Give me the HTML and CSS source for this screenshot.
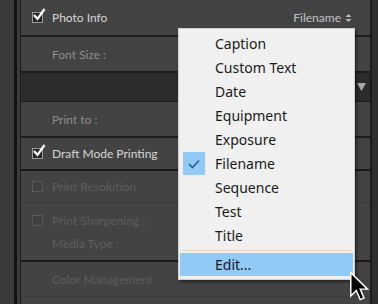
FILE: index.html
```html
<!DOCTYPE html>
<html lang="en">

<head>
  <meta charset="UTF-8">
  <title>Print Settings</title>
  <link rel="stylesheet" href="styles.css">
</head>

<body>
  <div class="frame">
    <div class="edge-strip"></div>
    <div class="edge-dark"></div>
    <div class="edge-gap"></div>

    <div class="panel">
      <div class="row row-first">
        <span class="checkbox checked">
          <svg viewBox="0 0 14 14" width="14" height="14"><path d="M2 7 L5.5 11 L12.5 1" fill="none" stroke="#fff" stroke-width="2.2"/></svg>
        </span>
        <span class="label">Photo Info</span>
        <span class="select">Filename
          <svg viewBox="0 0 7 10" width="7" height="10"><path d="M0.5 4 L3.5 1 L6.5 4 Z M0.5 6 L3.5 9 L6.5 6 Z" fill="#b8b8b8"/></svg>
        </span>
      </div>
      <div class="row row-plain">
        <span class="label dim">Font Size :</span>
      </div>

      <div class="header">
        <svg viewBox="0 0 9 8" width="9" height="8"><path d="M0 0 L9 0 L4.5 8 Z" fill="#a8a8a8"/></svg>
      </div>

      <div class="row row-plain">
        <span class="label dim">Print to :</span>
      </div>
      <div class="row row-check">
        <span class="checkbox checked">
          <svg viewBox="0 0 14 14" width="14" height="14"><path d="M2 7 L5.5 11 L12.5 1" fill="none" stroke="#fff" stroke-width="2.2"/></svg>
        </span>
        <span class="label">Draft Mode Printing</span>
      </div>
      <div class="row row-check faint-line">
        <span class="checkbox off"></span>
        <span class="label off">Print Resolution</span>
      </div>
      <div class="group">
        <div class="group-line">
          <span class="checkbox off"></span>
          <span class="label off">Print Sharpening :</span>
        </div>
        <div class="group-line sub">
          <span class="label off">Media Type :</span>
        </div>
      </div>
      <div class="row row-plain faint-line">
        <span class="label off">Color Management</span>
      </div>
    </div>

    <div class="edge-right"></div>
  </div>

  <div class="menu">
    <div class="menu-item">Caption</div>
    <div class="menu-item">Custom Text</div>
    <div class="menu-item">Date</div>
    <div class="menu-item">Equipment</div>
    <div class="menu-item">Exposure</div>
    <div class="menu-item">
      <span class="tick">
        <svg viewBox="0 0 12 10" width="12" height="10"><path d="M1 5 L4.5 8.5 L11 1.5" fill="none" stroke="#2f5f8f" stroke-width="1.6"/></svg>
      </span>
      Filename
    </div>
    <div class="menu-item">Sequence</div>
    <div class="menu-item">Test</div>
    <div class="menu-item">Title</div>
    <div class="menu-sep"></div>
    <div class="menu-item active">Edit...</div>
  </div>

  <svg class="cursor" viewBox="0 0 13 20" width="19" height="29">
    <path d="M0.5 0.5 L0.5 16.5 L4.3 12.8 L7 19 L9.6 17.9 L7 11.8 L12 11.8 Z" fill="#000" stroke="#fff" stroke-width="1"/>
  </svg>
</body>

</html>
```

FILE: styles.css
```css
body {
  margin: 0;
  background-color: #333;
  font-family: Lato, "Noto Sans", sans-serif;
  width: 378px;
  height: 304px;
  overflow: hidden;
}

.frame {
  display: flex;
  height: 304px;
}

.edge-strip {
  width: 14px;
  background-color: #3a3a3a;
}

.edge-dark {
  width: 3px;
  background-color: #111;
}

.edge-gap {
  width: 3px;
  background-color: #3c3c3c;
}

.panel {
  width: 349px;
  border-left: 1px solid #1c1c1c;
  border-right: 2px solid #1c1c1c;
  background-color: #434343;
  display: flex;
  flex-direction: column;
}

.edge-right {
  flex: 1;
  background-color: #2f2f2f;
}

.row {
  display: flex;
  align-items: center;
  border-bottom: 2px solid #1c1c1c;
  font-size: 12px;
  color: #d6d6d6;
}

.row-first {
  height: 35px;
  padding-left: 11px;
  padding-right: 18px;
}

.row-plain {
  height: 34px;
  padding-left: 31px;
}

.row-check {
  height: 31px;
  padding-left: 11px;
}

.faint-line {
  border-bottom: 1px solid #3a3a3a;
}

.header {
  height: 28px;
  background-color: #2c2c2c;
  border-bottom: 1px solid #1c1c1c;
  display: flex;
  align-items: center;
  justify-content: flex-end;
  padding-right: 4px;
}

.checkbox {
  width: 9px;
  height: 9px;
  margin-right: 9px;
  position: relative;
  flex-shrink: 0;
}

.checkbox.checked {
  background-color: #262626;
  border: 1px solid #9a9a9a;
}

.checkbox.checked svg {
  position: absolute;
  left: -1px;
  top: -5px;
}

.checkbox.off {
  border: 1px solid #575757;
  background-color: #404040;
}

.dim {
  color: #8e8e8e;
}

.off {
  color: #5e5e5e;
}

.select {
  margin-left: auto;
  color: #c4c4c4;
  display: flex;
  align-items: center;
  gap: 4px;
  font-size: 12px;
}

.group {
  height: 59px;
  border-bottom: 2px solid #1a1a1a;
  padding-left: 11px;
  padding-top: 6px;
  box-sizing: border-box;
  font-size: 12px;
}

.group-line {
  height: 23px;
  display: flex;
  align-items: center;
}

.group-line.sub {
  padding-left: 20px;
}

.menu {
  position: absolute;
  left: 178px;
  top: 28px;
  width: 173px;
  padding: 3px 1px 3px 1px;
  background-color: #f0f0f0;
  border: 1px solid #cfcfcf;
  box-shadow: 2px 2px 3px rgba(0, 0, 0, 0.45);
  font-family: "Noto Sans", sans-serif;
  font-size: 14px;
  color: #1a1a1a;
}

.menu-item {
  height: 24px;
  line-height: 24px;
  padding-left: 35px;
  position: relative;
}

.menu-item.active {
  background-color: #91c9f7;
  height: 23px;
  line-height: 23px;
}

.tick {
  position: absolute;
  left: 3px;
  top: 0;
  width: 22px;
  height: 23px;
  background-color: #91c9f7;
  display: flex;
  align-items: center;
  justify-content: center;
}

.menu-sep {
  height: 1px;
  margin: 2px;
  background-color: #d9d3c7;
}

.cursor {
  position: absolute;
  left: 350px;
  top: 272px;
}
```
